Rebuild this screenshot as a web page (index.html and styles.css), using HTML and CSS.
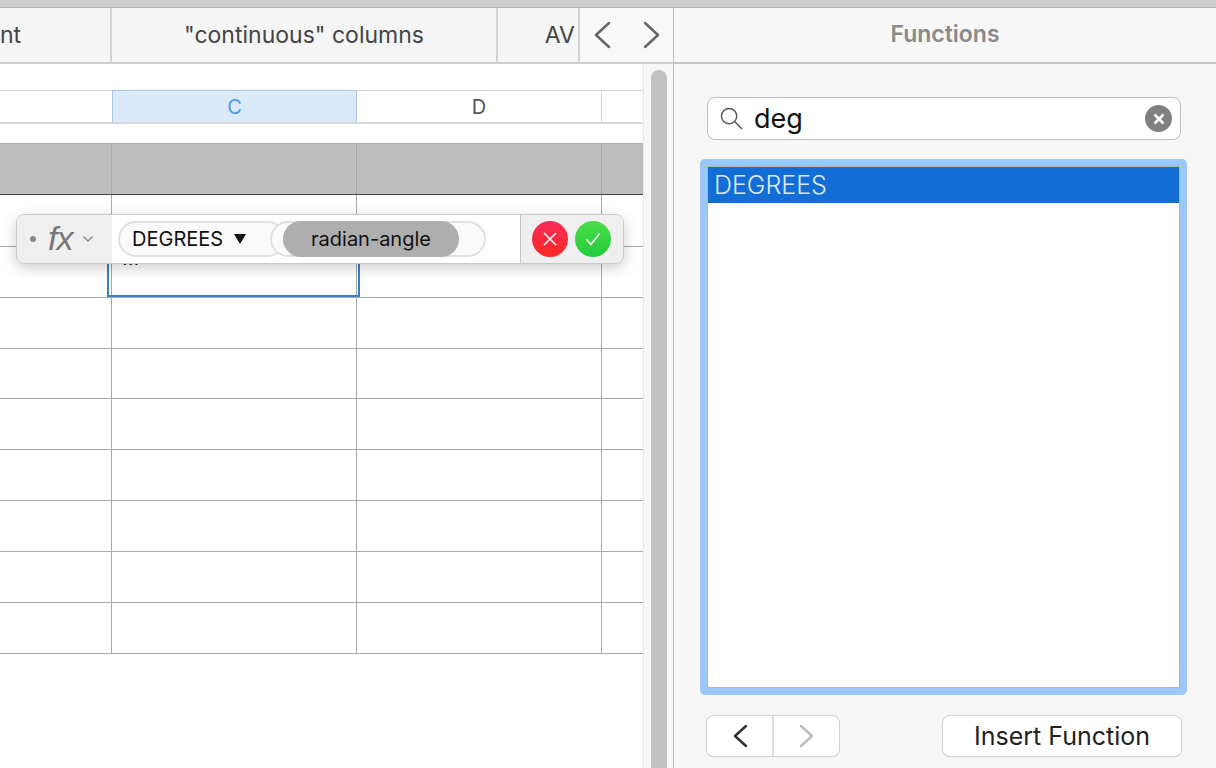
FILE: index.html
```html
<!DOCTYPE html>
<html lang="en">
<head>
<meta charset="utf-8">
<title>Functions</title>
<link rel="stylesheet" href="styles.css">
</head>
<body>
<div class="topbar"></div>
<div class="app">
  <section class="left">
    <nav class="tabs">
      <div class="tab tab-a"><span>nt</span></div>
      <div class="tab tab-b">"continuous" columns</div>
      <div class="tab tab-c">AV</div>
      <div class="tab-arrows">
        <svg class="arrow" viewBox="0 0 18 28"><path d="M16 2 3 14l13 12"/></svg>
        <svg class="arrow" viewBox="0 0 18 28"><path d="M2 2l13 12L2 26"/></svg>
      </div>
    </nav>
    <div class="body">
      <div class="sheet">
        <div class="col-head">
          <div class="ch ch-a"></div>
          <div class="ch ch-sel">C</div>
          <div class="ch">D</div>
          <div class="ch ch-last"></div>
        </div>
        <div class="row row-head"><i></i><i></i><i></i><i></i></div>
        <div class="row r52"><i></i><i></i><i></i><i></i></div>
        <div class="row r51"><i></i><i class="cell-text">…</i><i></i><i></i></div>
        <div class="row r51"><i></i><i></i><i></i><i></i></div>
        <div class="row r50"><i></i><i></i><i></i><i></i></div>
        <div class="row r51"><i></i><i></i><i></i><i></i></div>
        <div class="row r51"><i></i><i></i><i></i><i></i></div>
        <div class="row r51"><i></i><i></i><i></i><i></i></div>
        <div class="row r51"><i></i><i></i><i></i><i></i></div>
        <div class="row r51"><i></i><i></i><i></i><i></i></div>
      </div>
      <div class="scroll"><div class="thumb"></div></div>
      <div class="selected"></div>
      <div class="fbar">
        <div class="fx-side">
          <span class="dot"></span>
          <span class="fx">fx</span>
          <svg class="chev" viewBox="0 0 12 8"><path d="M1.5 1.5 6 6l4.500-4.500"/></svg>
        </div>
        <div class="fmain">
          <span class="pill-fn">DEGREES <b class="tri"></b></span>
          <span class="pill-open">
            <span class="pill-arg">radian-angle</span>
          </span>
        </div>
        <div class="fbtns">
          <span class="btn-round red"><svg viewBox="0 0 16 16"><path d="M2 2l12 12M14 2 2 14"/></svg></span>
          <span class="btn-round green"><svg viewBox="0 0 16 16"><path d="M1.500 8.500 6 13.500 14.500 2.500"/></svg></span>
        </div>
      </div>
    </div>
  </section>
  <aside class="right">
    <header class="rhead">Functions</header>
    <div class="rbody">
      <div class="search">
        <svg class="mag" viewBox="0 0 24 24"><circle cx="9.500" cy="9.500" r="8"/><path d="M15.500 15.500 23 23"/></svg>
        <span class="query">deg</span>
        <span class="clear"><svg viewBox="0 0 12 12"><path d="M1.500 1.500l9 9M10.500 1.500l-9 9"/></svg></span>
      </div>
      <div class="list-focus">
        <div class="list"><div class="item">DEGREES</div></div>
      </div>
      <div class="actions">
        <div class="seg">
          <span class="seg-btn"><svg viewBox="0 0 16 24"><path d="M14 2 3 12l11 10"/></svg></span>
          <span class="seg-btn off"><svg viewBox="0 0 16 24"><path d="M2 2l11 10L2 22"/></svg></span>
        </div>
        <div class="insert">Insert Function</div>
      </div>
    </div>
  </aside>
</div>
</body>
</html>
```
FILE: styles.css
```css
* { box-sizing: border-box; }
html, body { margin: 0; height: 768px; overflow: hidden; }
body { font-family: Inter, "Liberation Sans", sans-serif; background: #fff; color: #222; }
.topbar { height: 8px; background: #cdcdcd; border-bottom: 1px solid #b4b4b4; }
.app { display: flex; height: 760px; }
.left { width: 673px; display: flex; flex-direction: column; flex: none; }
.tabs { height: 56px; display: flex; background: #f5f5f5; border-bottom: 2px solid #cfcfcf; flex: none; }
.tab { border-right: 2px solid #d2d2d2; font-size: 23px; display: flex; align-items: center; justify-content: center; color: #444; padding-bottom: 1px; }
.tab-a { width: 112px; justify-content: flex-start; }
.tab-a span { margin-left: 0; }
.tab-b { width: 386px; }
.tab-c { width: 82px; justify-content: flex-end; padding-right: 3px; }
.tab-arrows { flex: 1; display: flex; align-items: center; justify-content: space-between; padding: 0 12px 0 13px; background: #f8f8f8; }
.arrow { width: 18px; height: 28px; fill: none; stroke: #666; stroke-width: 2.500; stroke-linecap: round; stroke-linejoin: round; }
.body { flex: 1; display: flex; position: relative; min-height: 0; }
.sheet { width: 643px; padding-top: 26px; flex: none; overflow: hidden; background: #fff; }
.col-head { display: grid; grid-template-columns: 112px 245px 245px 41px; height: 34px; border-top: 1px solid #d4d4d4; border-bottom: 2px solid #d8d8d8; }
.ch { display: flex; align-items: center; justify-content: center; font-size: 20px; color: #555; border-right: 1px solid #d8d8d8; }
.ch-sel { background: #dbeafb; color: #4a9bf0; border: 1px solid #a8c6e8; border-bottom: 0; margin-top: -1px; }
.ch-a { border-right: 0; }
.ch-last { border-right: 0; }
.row { display: grid; grid-template-columns: 112px 245px 245px 41px; border-bottom: 1px solid #a9a9a9; }
.row i { border-right: 1px solid #a9a9a9; font-style: normal; }
.row i:last-child { border-right: 0; }
.row-head { margin-top: 19px; height: 52px; background: #bdbebd; border-top: 1px solid #aaa; border-bottom: 1px solid #444; }
.row-head i { border-right-color: #a8a8a8; }
.r52 { height: 52px; }
.r51 { height: 51px; }
.r50 { height: 50px; }
.cell-text { font-size: 20px; color: #111; padding-left: 10px; line-height: 1.1; }
.scroll { flex: 1; background: #f7f7f7; border-left: 1px solid #e8e8e8; padding: 6px 6px 0 7px; }
.thumb { height: 720px; background: #c1c1c1; border-radius: 8px; }
.selected { position: absolute; left: 107px; top: 170px; width: 253px; height: 63px; border: 2px solid #3a80c8; }
.fbar { position: absolute; left: 16px; top: 150px; width: 608px; height: 50px; display: flex; border: 1px solid #c9c9c9; border-radius: 8px; background: #fff; box-shadow: 0 4px 14px rgba(0,0,0,.2); overflow: hidden; }
.fx-side { width: 95px; flex: none; background: #efefef; display: flex; align-items: center; padding-left: 13px; }
.dot { width: 6px; height: 6px; border-radius: 50%; background: #888; }
.fx { font-family: "Liberation Serif", serif; font-family: "Liberation Sans", sans-serif; font-style: italic; font-size: 34px; color: #777; margin-left: 12px; line-height: 1; letter-spacing: -1px; position: relative; top: -1px; }
.chev { width: 12px; height: 8px; margin-left: 10px; fill: none; stroke: #888; stroke-width: 1.500; }
.fmain { flex: 1; display: flex; align-items: center; padding-left: 6px; position: relative; }
.pill-fn { width: 168px; height: 36px; border: 2px solid #e0e0e0; border-radius: 18px; background: #fafafa; font-size: 20px; color: #111; display: flex; align-items: center; padding-left: 12px; white-space: pre; flex: none; }
.tri { width: 0; height: 0; border-left: 6.500px solid transparent; border-right: 6.500px solid transparent; border-top: 10px solid #111; margin-left: 5px; }
.pill-open { margin-left: -16px; width: 216px; height: 36px; border: 2px solid #e0e0e0; border-radius: 18px; background: #fafafa; display: flex; align-items: center; padding-left: 11px; flex: none; }
.pill-arg { width: 176px; height: 36px; border-radius: 18px; background: #aeaeae; font-size: 20px; color: #111; display: flex; align-items: center; justify-content: center; flex: none; }
.fbtns { width: 103px; flex: none; background: #efefef; border-left: 1px solid #c4c4c4; display: flex; align-items: center; gap: 7px; padding-left: 11px; }
.btn-round { width: 36px; height: 36px; border-radius: 50%; display: flex; align-items: center; justify-content: center; }
.btn-round svg { width: 16px; height: 16px; fill: none; stroke: #fff; stroke-width: 1.600; }
.red { background: linear-gradient(#fb2a5a, #fb2a22); }
.green { background: linear-gradient(#4bdc48, #22cc3c); }
.right { flex: 1; background: #f6f6f6; border-left: 1px solid #bdbdbd; display: flex; flex-direction: column; min-width: 0; }
.rhead { height: 56px; background: #f7f7f7; border-bottom: 2px solid #c2c6ca; display: flex; align-items: center; justify-content: center; font-size: 23px; font-weight: 600; color: #8a8a8a; flex: none; padding-bottom: 2px; }
.rbody { flex: 1; padding: 33px 35px 0 33px; display: flex; flex-direction: column; }
.search { height: 43px; background: #fff; border: 1px solid #c0c0c0; border-radius: 8px; display: flex; align-items: center; padding: 0 8px 0 12px; flex: none; }
.mag { width: 23px; height: 23px; fill: none; stroke: #555; stroke-width: 1.500; flex: none; }
.query { font-size: 27px; color: #111; margin-left: 11px; flex: 1; line-height: 1; }
.clear { width: 27px; height: 27px; border-radius: 50%; background: #808080; display: flex; align-items: center; justify-content: center; }
.clear svg { width: 12px; height: 12px; fill: none; stroke: #fff; stroke-width: 2.500; }
.list-focus { margin: 19px -6px 0 -7px; height: 536px; background: #9bc8f8; border-radius: 5px; padding: 7px; flex: none; }
.list { height: 100%; background: #fff; border: 1px solid #b4b4b4; }
.item { height: 36px; background: #126dd6; color: #dbe9fa; font-size: 25px; font-weight: 300; padding-left: 6px; display: flex; align-items: center; }
.actions { display: flex; justify-content: space-between; margin-top: 21px; flex: none; }
.seg { width: 132px; height: 40px; display: flex; background: #fff; border-radius: 7px; box-shadow: 0 0 0 1px #d4d4d4, 0 1px 1px #b8b8b8; }
.seg-btn { flex: 1; display: flex; align-items: center; justify-content: center; }
.seg-btn:first-child { border-right: 2px solid #dcdcdc; }
.seg-btn svg { width: 16px; height: 24px; fill: none; stroke: #333; stroke-width: 2.500; stroke-linecap: round; stroke-linejoin: round; }
.seg-btn.off svg { stroke: #bdbdbd; }
.insert { width: 238px; height: 40px; background: #fff; border-radius: 7px; box-shadow: 0 0 0 1px #d4d4d4, 0 1px 1px #b8b8b8; display: flex; align-items: center; justify-content: center; font-size: 25px; color: #222; }
```
